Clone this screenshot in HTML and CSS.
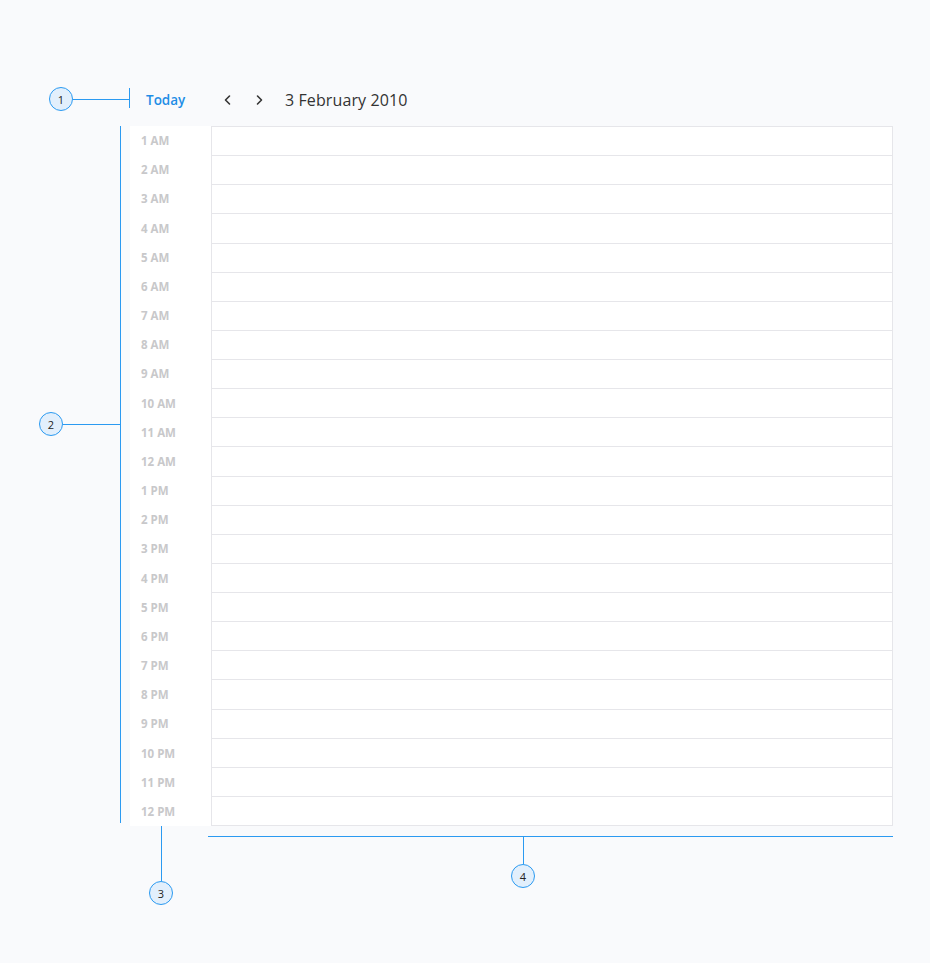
FILE: index.html
```html
<!DOCTYPE html>
<html>
<head>
<meta charset="utf-8">
<link rel="stylesheet" href="styles.css">
</head>
<body>
<div class="page">
  <div class="toolbar">
    <span class="today">Today</span>
    <span class="nav">
      <svg width="10" height="12" viewBox="0 0 10 12"><path d="M6.5 2 L2.5 6 L6.5 10" fill="none" stroke="#333" stroke-width="1.6" stroke-linecap="round" stroke-linejoin="round"/></svg>
    </span>
    <span class="nav">
      <svg width="10" height="12" viewBox="0 0 10 12"><path d="M3.5 2 L7.5 6 L3.5 10" fill="none" stroke="#333" stroke-width="1.6" stroke-linecap="round" stroke-linejoin="round"/></svg>
    </span>
    <span class="date">3 February 2010</span>
  </div>
  <div class="calendar">
    <div class="times">
      <div class="t">1 AM</div><div class="t">2 AM</div><div class="t">3 AM</div><div class="t">4 AM</div>
      <div class="t">5 AM</div><div class="t">6 AM</div><div class="t">7 AM</div><div class="t">8 AM</div>
      <div class="t">9 AM</div><div class="t">10 AM</div><div class="t">11 AM</div><div class="t">12 AM</div>
      <div class="t">1 PM</div><div class="t">2 PM</div><div class="t">3 PM</div><div class="t">4 PM</div>
      <div class="t">5 PM</div><div class="t">6 PM</div><div class="t">7 PM</div><div class="t">8 PM</div>
      <div class="t">9 PM</div><div class="t">10 PM</div><div class="t">11 PM</div><div class="t">12 PM</div>
    </div>
    <div class="grid">
      <div class="r"></div><div class="r"></div><div class="r"></div><div class="r"></div>
      <div class="r"></div><div class="r"></div><div class="r"></div><div class="r"></div>
      <div class="r"></div><div class="r"></div><div class="r"></div><div class="r"></div>
      <div class="r"></div><div class="r"></div><div class="r"></div><div class="r"></div>
      <div class="r"></div><div class="r"></div><div class="r"></div><div class="r"></div>
      <div class="r"></div><div class="r"></div><div class="r"></div><div class="r"></div>
    </div>
  </div>

  <!-- annotations -->
  <div class="ann a1-line"></div>
  <div class="ann a1-tick"></div>
  <div class="badge b1">1</div>

  <div class="ann a2-line"></div>
  <div class="ann a2-bar"></div>
  <div class="badge b2">2</div>

  <div class="ann a3-line"></div>
  <div class="badge b3">3</div>

  <div class="ann a4-bar"></div>
  <div class="ann a4-line"></div>
  <div class="badge b4">4</div>
</div>
</body>
</html>
```
FILE: styles.css
```css
html, body {
  margin: 0;
  padding: 0;
  background: #f9fafc;
}
.page {
  position: relative;
  width: 930px;
  height: 963px;
  font-family: "Open Sans", "Liberation Sans", sans-serif;
}
.toolbar {
  display: flex;
  align-items: center;
  height: 24px;
  padding-top: 88px;
  padding-left: 146px;
}
.today {
  color: #1f8ee6;
  font-size: 13.5px;
  font-weight: 600;
  width: 77px;
}
.nav {
  display: flex;
  align-items: center;
  width: 31px;
}
.nav svg { display: block; }
.date {
  margin-left: 0;
  font-size: 16px;
  color: #333;
  letter-spacing: 0.1px;
}
.calendar {
  display: flex;
  margin-top: 14px;
  margin-left: 130px;
  height: 700px;
}
.times {
  width: 81px;
  background: #fff;
  display: grid;
  grid-template-rows: repeat(24, 1fr);
}
.t {
  display: flex;
  align-items: center;
  padding-left: 11px;
  font-size: 11.5px;
  font-weight: 700;
  color: #c8c8ca;
}
.grid {
  width: 680px;
  background: #fff;
  border: 1px solid #e6e6ea;
  border-bottom: none;
  display: grid;
  grid-template-rows: repeat(24, 1fr);
}
.r {
  border-bottom: 1px solid #e6e6ea;
}
.ann {
  position: absolute;
  background: #2b9af1;
}
.badge {
  position: absolute;
  width: 22px;
  height: 22px;
  border: 1px solid #2b9af1;
  border-radius: 50%;
  background: #e2effc;
  color: #222;
  font-size: 11px;
  display: flex;
  align-items: center;
  justify-content: center;
  font-family: "Open Sans", "Liberation Sans", sans-serif;
}
.b1 { left: 49px; top: 87px; }
.a1-line { left: 73px; top: 99px; width: 56px; height: 1px; }
.a1-tick { left: 129px; top: 88px; width: 1px; height: 20px; }

.b2 { left: 39px; top: 412px; }
.a2-line { left: 63px; top: 424px; width: 57px; height: 1px; }
.a2-bar { left: 120px; top: 126px; width: 1px; height: 697px; }

.b3 { left: 149px; top: 881px; }
.a3-line { left: 161px; top: 826px; width: 1px; height: 55px; }

.b4 { left: 511px; top: 864px; }
.a4-bar { left: 208px; top: 836px; width: 685px; height: 1px; }
.a4-line { left: 523px; top: 837px; width: 1px; height: 27px; }
```
